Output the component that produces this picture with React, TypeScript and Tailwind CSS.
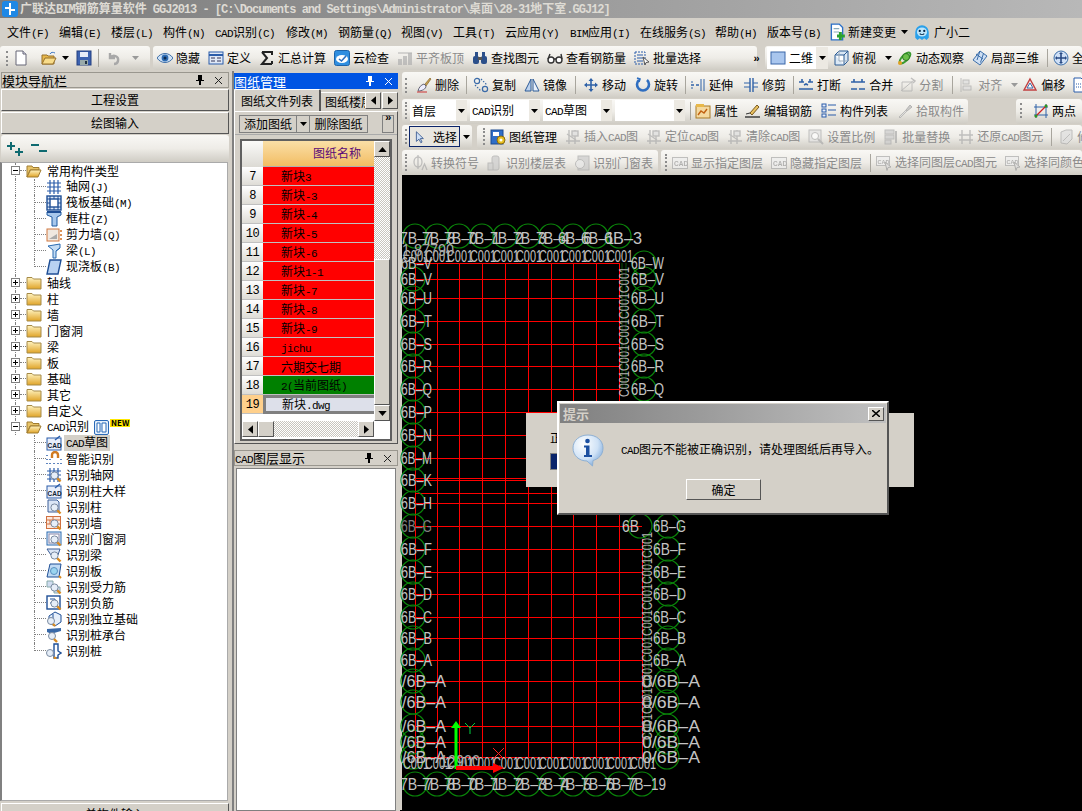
import React from "react";

const mono = "[font-family:'Liberation_Mono','Noto_Sans_CJK_SC',monospace] text-[11px] tracking-[-0.6px]";
const monoTitle = "[font-family:'Liberation_Mono','Noto_Sans_CJK_SC',monospace] text-[12px] tracking-[-1px]";
const raised = "border border-t-white border-l-white border-r-[#555] border-b-[#555] bg-[#d4d0c8]";
const bar = "bg-gradient-to-b from-[#f9f8f5] via-[#eeece7] to-[#cfccc4] rounded-[3px]";

function T({ s, className = "", latin = mono }: { s: string; className?: string; latin?: string }) {
  const parts = s.split(/([\x00-\x7f]+)/).filter(Boolean);
  return (
    <span className={"whitespace-pre leading-none " + className}>
      {parts.map((p, i) => (/^[\x00-\x7f]/.test(p) ? <span key={i} className={latin}>{p}</span> : <span key={i}>{p}</span>))}
    </span>
  );
}

const B = "#2a5caa";
const Mag = () => (
  <g>
    <path d="M11 11l3.500 3.500" stroke="#d98a1f" strokeWidth="2.400" />
    <circle cx="8.500" cy="8.500" r="3.600" fill="#e6eef8" stroke="#7a8aa0" />
  </g>
);
const Cad = () => (
  <g>
    <rect x="1" y="3" width="14" height="12" fill="#e8eefa" stroke={B} />
    <path d="M9 5l5-4" stroke={B} strokeWidth="1.500" />
    <text x="1.600" y="13" fontSize="6.500" fontWeight="700" fill="#123" fontFamily="Liberation Sans">CAD</text>
  </g>
);
const GridI = (
  <g stroke={B} strokeWidth="1.200" fill="none"><path d="M1 4h14M1 8h14M1 12h14M4 1v14M8 1v14M12 1v14" /></g>
);
const icons: Record<string, React.ReactNode> = {
  newf: <g><path d="M3 1h7l3 3v11H3z" fill="#fff" stroke="#667" /><path d="M10 1v3h3" fill="#dde" stroke="#667" /></g>,
  open: <g><path d="M1 5h5l1 1h6v8H1z" fill="#e8b84a" stroke="#96702a" /><path d="M1 14l3-6h11l-3 6z" fill="#f8dc8a" stroke="#96702a" /><path d="M9 4c1-2 3-2 5-1" stroke="#3a76c4" fill="none" /></g>,
  save: <g><rect x="1" y="1" width="14" height="14" fill="#3c62b0" stroke="#223f80" /><rect x="4" y="2" width="8" height="5" fill="#e6ecf8" /><rect x="4" y="10" width="8" height="5" fill="#9aa" /><rect x="9" y="11" width="2" height="3" fill="#234" /></g>,
  undo: <path d="M4 3v5h5M4 8c3-4 9-2 8 3-.4 2-2 3-4 3" stroke="#a8a8a8" strokeWidth="2.400" fill="none" />,
  eye: <g><path d="M0 8c4-6 12-6 16 0-4 6-12 6-16 0z" fill="#cfe2f6" stroke="#3f6fa8" /><circle cx="8" cy="8" r="3.400" fill="#2f6db4" /><circle cx="8" cy="8" r="1.500" fill="#0c2a50" /></g>,
  def: <g><rect x="1" y="2" width="14" height="12" fill="#dfe8f6" stroke={B} /><path d="M1 5h14" stroke={B} strokeWidth="2" /><path d="M3 8h4M3 11h4M9 8h4M9 11h4" stroke="#335" /></g>,
  sigma: <path d="M3 2h10v3M13 14H3l5-6-5-6M13 11v3" stroke="#222" strokeWidth="2" fill="none" />,
  cloud: <g><rect x="0.500" y="0.500" width="15" height="15" rx="2" fill="#2f8ee0" stroke="#1d63a8" /><ellipse cx="8" cy="9" rx="6" ry="4" fill="#fff" /><path d="M5 9l2.500 2L12 6" stroke="#2a6fc0" strokeWidth="1.600" fill="none" /></g>,
  gAlign: <g fill="#b0b0b0"><path d="M1 9h4v6H1zM6 6h4v9H6zM11 3h4v12h-4z" /><path d="M1 3h14" stroke="#999" /></g>,
  binoc: <g fill="#2b4f8a"><rect x="1" y="6" width="6" height="8" rx="2" /><rect x="9" y="6" width="6" height="8" rx="2" /><rect x="3" y="2" width="3" height="5" /><rect x="10" y="2" width="3" height="5" /><rect x="6" y="7" width="4" height="3" fill="#555" /></g>,
  glasses: <g stroke="#333" strokeWidth="1.400" fill="#fff"><circle cx="4" cy="10" r="3" /><circle cx="12" cy="10" r="3" /><path d="M7 9h2M1 9l2-5M15 9l-1-5" fill="none" /></g>,
  batch: <g fill="none" stroke={B}><rect x="1" y="2" width="10" height="12" strokeDasharray="2 1" /><path d="M3 5h6M3 8h6M3 11h6" /><path d="M9 7l6 5-3 .5-1 2.500z" fill="#fff" stroke="#555" /></g>,
  twoD: <rect x="1" y="2" width="14" height="12" fill="#a9c6ee" stroke="#3a66a8" />,
  cube: <g stroke="#2b5a92"><path d="M2 5l4-4h9v10l-4 4H2z" fill="#dbe8f5" /><path d="M2 5h9v10M11 5l4-4" fill="#fff" /><path d="M6 1v10h9" stroke="#9ab" fill="none" /></g>,
  orbit: <g><ellipse cx="8" cy="8" rx="7" ry="3" transform="rotate(-45 8 8)" fill="none" stroke="#3a9a30" strokeWidth="2" /><circle cx="9" cy="7" r="3.500" fill="#6cc04a" stroke="#2a7a20" /><circle cx="3" cy="13" r="2" fill="#e0a020" /></g>,
  local3: <g stroke="#3c6ea8" fill="#cfe0f4"><path d="M8 1l7 5-7 9-7-5z" /><path d="M4 4l7 5M8 1l-3 9M11.500 3.500l-3 9" fill="none" /></g>,
  full: <g><circle cx="8" cy="8" r="7" fill="#cfe0f6" stroke="#3c6ea8" /><path d="M8 3v10M3 8h10" stroke="#284a84" strokeWidth="1.600" /><path d="M8 2l-2 2h4zM8 14l-2-2h4zM2 8l2-2v4zM14 8l-2-2v4z" fill="#284a84" /></g>,
  del: <g><path d="M9 7l5-6 1 1-5 7z" fill="#c8a050" stroke="#785a20" strokeWidth=".6" /><path d="M2 14c1-4 3-6 6-7l2 2c0 3-4 5-8 5z" fill="#eef" stroke="#667" /><path d="M1 15h10" stroke="#c33" /></g>,
  copy: <g fill="none" stroke="#3a6aa8" strokeWidth="1.200"><circle cx="4" cy="4" r="2.600" /><circle cx="12" cy="12" r="2.600" /><path d="M8 2l6 6" strokeDasharray="1.500 1.500" /><path d="M2 8l6 6" strokeDasharray="1.500 1.500" /></g>,
  mirror: <g stroke="#2d5a96"><path d="M7 2L1 14h6z" fill="#bcd2ee" /><path d="M9 2l6 12H9z" fill="#eaf1fb" /></g>,
  move: <path d="M8 1l-2.500 3h1.700v3.200H4V5.500L1 8l3 2.500V8.800h3.200V12H5.500L8 15l2.500-3H8.800V8.800H12v1.700L15 8l-3-2.500v1.700H8.800V4h1.700z" fill="#2f62a8" />,
  rotate: <g fill="none" stroke="#2f6ec0" strokeWidth="2.600"><path d="M4 3a6 6 0 1 0 8 0" /><path d="M2 1l3 1-1 3" strokeWidth="1.600" /></g>,
  extend: <g stroke="#2f62a8" fill="none"><path d="M1 8h3M6 8h3" strokeWidth="1.600" /><path d="M11 2v12M14 2v12" /><path d="M1 5h2M1 11h2" /></g>,
  trim: <g stroke="#2f62a8" fill="none"><path d="M7 1v14M10 1v14" strokeWidth="1.400" /><path d="M1 6h6M1 10h6M10 6h5M10 10h5" /></g>,
  brk: <g stroke="#2f62a8" strokeWidth="1.600" fill="none"><path d="M1 5h5M10 5h5M1 12h14" /><path d="M4 2v3M12 2v3" /><path d="M6 8l2-1 2 1" /></g>,
  merge: <g stroke="#2f62a8" strokeWidth="1.600" fill="none"><path d="M1 5h14M1 12h6M9 12h6" /><path d="M4 2v3M12 2v3" /></g>,
  split: <g stroke="#aaa" fill="none"><path d="M1 14L14 3M2 5h10v9H2z" /><path d="M11 1l4 3-2 2" strokeWidth="1.500" /></g>,
  alignG: <g stroke="#aaa" fill="#ddd"><path d="M2 1v14" /><rect x="4" y="3" width="6" height="4" /><rect x="4" y="9" width="8" height="4" /></g>,
  offset: <g><path d="M8 2l6 11H2z" fill="#f4dfe0" stroke="#c04040" strokeWidth="1.400" /><path d="M8 6l3 5H5z" fill="#fff" stroke="#3a6aa8" /></g>,
  docu: <g><path d="M3 1h7l3 3v11H3z" fill="#fff" stroke={B} /><path d="M5 7h6M5 10h6" stroke={B} strokeDasharray="1 1" /></g>,
  attr: <g><rect x="1" y="3" width="14" height="12" fill="#f4d9a0" stroke="#a87824" /><rect x="1" y="1" width="8" height="3" fill="#e8b84a" /><path d="M3 12l3-4 3 2 3-4" stroke="#c06010" fill="none" strokeWidth="1.400" /></g>,
  edit: <g><path d="M5 10l7-8 2 2-7 8z" fill="#e8c060" stroke="#7a5a20" /><path d="M0 14h15" stroke="#333" strokeWidth="1.400" /><path d="M1 11l4-1" stroke="#333" /></g>,
  list: <g fill="#e8eefa" stroke={B}><rect x="1" y="1" width="4" height="3" /><rect x="1" y="6" width="4" height="3" /><rect x="1" y="11" width="4" height="3" /><path d="M7 2h8M7 7h8M7 12h8" /></g>,
  pick: <g><path d="M9 7l4-5 2 2-5 4z" fill="#bbb" stroke="#999" /><path d="M2 14l7-7 1 1-7 7z" fill="#ddd" stroke="#aaa" /></g>,
  twop: <g><path d="M3 1v14M13 1v14M1 4h14M1 12h14" stroke="#2f62a8" /><path d="M2 14L14 2" stroke="#d02020" strokeWidth="1.200" /><circle cx="3" cy="13" r="1.500" fill="#2a9a20" /><circle cx="13" cy="3" r="1.500" fill="#2a9a20" /></g>,
  pmgr: <g><rect x="1" y="1" width="12" height="14" fill="#2f6ec8" stroke="#1c4a90" /><rect x="3" y="3" width="6" height="4" fill="#fff" /><circle cx="11" cy="11" r="4" fill="#e8c020" stroke="#8a6a10" /><circle cx="11" cy="11" r="1.500" fill="#fff" /></g>,
  gCad: <g stroke="#aaa" fill="none" strokeWidth="1.400"><path d="M4 1v14M10 1v14M1 12h14" /><path d="M2 5l9 6" /><rect x="7" y="2" width="6" height="5" fill="#ddd" /></g>,
  gMag: <g><rect x="1" y="1" width="12" height="12" fill="#e4e4e4" stroke="#aaa" /><circle cx="7" cy="7" r="3.500" fill="#fff" stroke="#aaa" /><path d="M10 10l5 5" stroke="#aaa" strokeWidth="2" /></g>,
  gStack: <g fill="#ccc" stroke="#aaa"><rect x="2" y="1" width="9" height="4" /><rect x="2" y="6" width="9" height="4" /><rect x="2" y="11" width="6" height="4" /><path d="M13 2v12" strokeWidth="2" /></g>,
  gGrid: <g stroke="#aaa" fill="none" strokeWidth="1.400"><path d="M4 1v14M12 1v14M1 6h14M1 11h14" /></g>,
  gPhi: <g fill="none" stroke="#aaa" strokeWidth="1.300"><ellipse cx="6" cy="7" rx="4" ry="5" /><path d="M6 0v14" /><path d="M10 15l2.500-6 2.500 6" /></g>,
  gFloor: <g fill="#ccc" stroke="#aaa"><rect x="5" y="1" width="7" height="14" rx="2" /><rect x="1" y="8" width="5" height="7" /></g>,
  gDoor: <g fill="#ccc" stroke="#aaa"><rect x="4" y="1" width="11" height="14" /><circle cx="6" cy="9" r="4.500" fill="#e6e6e6" /></g>,
  gBox: <g><rect x="0.500" y="2.500" width="15" height="11" fill="#eee" stroke="#aaa" /><text x="2" y="11" fontSize="6.500" fill="#999" fontFamily="Liberation Sans" fontWeight="700">CAD</text></g>,
  gSel: <g><rect x="0.500" y="1.500" width="13" height="9" fill="#eee" stroke="#aaa" /><text x="1.500" y="8.500" fontSize="5.500" fill="#999" fontFamily="Liberation Sans" fontWeight="700">CAD</text><path d="M9 7l6 5-3 .5-1 3z" fill="#ddd" stroke="#999" /></g>,
  gTool: <g stroke="#aaa" fill="#ddd"><path d="M3 14V3l5-2h6v9l-5 5z" /><path d="M5 12l7-7" /></g>,
  selArrow: <path d="M5 2v11l3-2.500 2 4 1.500-.7-2-4H13z" fill="#cfe0f6" stroke="#3a5a90" />,
  newDoc: <g><path d="M3 1h7l3 3v11H3z" fill="#fff" stroke="#2a70c8" strokeWidth="1.200" /><path d="M5 5h5M5 8h5" stroke="#8ab" /><path d="M11 8v7M8 11.500h7" stroke="#2aa030" strokeWidth="2.600" /></g>,
  bot: <g><path d="M2 8a6 6 0 0 1 12 0v5l-2 2-2-1.500L8 15l-2-1.500L4 15l-2-2z" fill="#2aa0ea" /><ellipse cx="8" cy="8" rx="4.500" ry="4" fill="#bfe6fb" /><circle cx="6" cy="7" r="1" fill="#024" /><circle cx="10" cy="7" r="1" fill="#024" /><path d="M6 9.500c1 1 3 1 4 0" stroke="#024" fill="none" /></g>,
  tGrid: GridI,
  tRaft: <g><rect x="1" y="1" width="14" height="14" fill="#dbe6f6" stroke="#1f4f96" strokeWidth="1.400" /><rect x="4" y="4" width="8" height="8" fill="#fff" stroke="#1f4f96" strokeWidth="1.400" /><path d="M1 4h3M1 8h3M1 12h3M12 4h3M12 8h3M12 12h3M4 1v3M8 1v3M12 1v3M4 12v3M8 12v3M12 12v3" stroke="#1f4f96" /></g>,
  tCol: <g><path d="M1 1h14v3l-4 2v9H6V6L1 4z" fill="#a8c8ec" stroke="#1f5aa0" /><path d="M1 1h14" stroke="#1f4f96" strokeWidth="2" /></g>,
  tWall: <g><rect x="1" y="2" width="12" height="12" fill="#f0e8e0" stroke="#d07840" /><path d="M3 12l8-5v5z" fill="#aaa" /><path d="M15 3v2M15 7v2M15 11v2" stroke="#d07020" strokeWidth="1.500" /></g>,
  tBeam: <g><path d="M2 3l12-2v4l-4 3v7H7V7z" fill="#c4dcf4" stroke="#2a6ab0" /><path d="M10 8l4-3" stroke="#2a6ab0" /></g>,
  tSlab: <path d="M4 1h11l-3 14H1z" fill="#b8d2f2" stroke="#1f4f96" strokeWidth="1.400" />,
  tCad: <Cad />,
  tMagnet: <g><path d="M6 7V4a3 3 0 0 1 6 0v3" fill="none" stroke="#d07a20" strokeWidth="2.400" /><path d="M1 4v1M1 8v1M1 12v1M4 8v1M4 12v1M8 12v1M12 12v1M15 8v1M15 12v1" stroke={B} strokeWidth="1.500" /></g>,
  rAxis: <g>{GridI}<Mag /></g>,
  rCad: <g><Cad /></g>,
  rCol: <g><path d="M2 1h9l2 2v10H2z" fill="#dbe6f6" stroke="#3c5f98" /><Mag /></g>,
  rWall: <g><rect x="0.500" y="1.500" width="14" height="12" fill="#fbe8dc" stroke="#d07040" /><path d="M1 5h14M1 9h14M7 1v4M4 5v4M10 5v4" stroke="#d07040" /><Mag /></g>,
  rDoor: <g><rect x="1" y="1" width="14" height="13" fill="#e6effa" stroke="#2a6ab0" /><rect x="3" y="3" width="10" height="9" fill="#fff" stroke="#88a" /><Mag /></g>,
  rBeam: <g><path d="M1 2h13l-2 6H5z" fill="#dbe6f6" stroke="#3c5f98" /><Mag /></g>,
  rSlab: <g><path d="M4 1h11l-2 13H1z" fill="#c0daf4" stroke="#1f4f96" /><circle cx="8" cy="8" r="3.500" fill="#9ad4f0" stroke="#5a90c0" /><path d="M13 13l2 2" stroke="#d98a1f" strokeWidth="2" /></g>,
  rRebar: <g><path d="M1 2h6v6H1zM8 8h6v6H8z" fill="#cfdcf0" stroke="#8aa" /><Mag /></g>,
  rNeg: <g><rect x="1" y="1" width="13" height="13" fill="#fff" stroke="#1f4f96" strokeWidth="1.400" /><path d="M4 4h5v4H4" fill="none" stroke="#1f4f96" /><Mag /></g>,
  rFound: <g><path d="M3 5l6-4 6 3v7l-6 4-6-3z" fill="#e6effa" stroke="#1f4f96" /><path d="M7 3v9" stroke="#1f4f96" /><circle cx="5" cy="10" r="3.500" fill="#e6eef8" stroke="#7a8aa0" /><path d="M7 13l2 2" stroke="#d98a1f" strokeWidth="2.400" /></g>,
  rCap: <g><path d="M1 2l14-1v3L8 6v2l-7-3z" fill="#3868a8" /><circle cx="6" cy="9" r="3.500" fill="#e6eef8" stroke="#7a8aa0" /><path d="M8 12l3 3" stroke="#d98a1f" strokeWidth="2.400" /></g>,
  rPile: <g><path d="M8 1h4v7l3 2-3 2v3H8v-4z" fill="#fff" stroke="#1f4f96" strokeWidth="1.400" /><circle cx="4" cy="10" r="3.500" fill="#e6eef8" stroke="#7a8aa0" /><path d="M8 14l2 2" stroke="#d98a1f" strokeWidth="2.400" /></g>,
};

const Ic = ({ k, size = 16, grey = false }: { k: string; size?: number; grey?: boolean }) => (
  <svg viewBox="0 0 16 16" width={size} height={size} className={"shrink-0" + (grey ? " grayscale opacity-70" : "")}>{icons[k]}</svg>
);

const Caret = ({ color = "#000" }: { color?: string }) => (
  <svg width="7" height="4" viewBox="0 0 7 4" className="shrink-0"><path d="M0 0h7L3.500 4z" fill={color} /></svg>
);
const Chev = () => <span className={mono + " font-bold text-[10px] -mt-1.5"}>»</span>;

const Grip = () => <span className="w-0 h-[15px] ml-[3px] mr-[5px] border-l-2 border-dotted border-[#8c8c8c] shrink-0" />;
const Sep = () => <span className="block w-0 h-[18px] border-l border-[#a8a59d] shrink-0" />;

function Tool({ k, s, grey, caret }: { k: string; s: string; grey?: boolean; caret?: boolean }) {
  return (
    <span className="flex items-center shrink-0 gap-[3px]">
      <Ic k={k} grey={grey} />
      <T s={s} className={grey ? "text-[#8a8a8a]" : "text-black"} />
      {caret && <span className="ml-1.5"><Caret color={grey ? "#999" : "#000"} /></span>}
    </span>
  );
}

function Sel({ s, w }: { s: string; w: string }) {
  return (
    <span className={"h-[21px] bg-white flex items-center justify-between shrink-0 " + w}>
      <T s={s} className="pl-[2px]" />
      <span className="h-full w-[11px] bg-[#ece9e2] flex items-center justify-center"><Caret /></span>
    </span>
  );
}

const cols = [415, 437, 459, 482, 505, 528, 551, 573, 596, 619];
const hLines = [264, 280, 299, 322, 345, 367, 390, 413, 436, 459, 479, 481, 494, 504, 527, 550, 573, 595, 618, 639, 661, 682, 703, 727, 743, 758];
const leftL: [number, string][] = [[280, "V"], [299, "U"], [322, "T"], [345, "S"], [367, "R"], [390, "Q"], [413, "P"], [436, "N"], [459, "M"], [481, "K"], [504, "H"], [527, "G"], [550, "F"], [573, "E"], [595, "D"], [618, "C"], [639, "B"], [661, "A"]];
const rightTop: [number, string][] = [[264, "W"], [280, "V"], [299, "U"], [322, "T"], [345, "S"], [367, "R"], [390, "Q"]];
const rightBot: [number, string][] = [[527, "G"], [550, "F"], [573, "E"], [595, "D"], [618, "C"], [639, "B"], [661, "A"]];
const slashY = [682, 703, 727, 743, 758];
const sans = "Liberation Sans";
const grayText = "#c4c4c4";

function Lbl({ x, y, s, w, fill = grayText }: { x: number; y: number; s: string; w: number; fill?: string }) {
  return <text x={x} y={y + 6} fontSize="16" fontFamily={sans} fill={fill} textLength={w} lengthAdjust="spacingAndGlyphs">{s}</text>;
}

function Canvas() {
  const top = ["7B–7", "7B–8", "7B–0", "7B–1", "7B–2", "7B–3", "7B–4", "6B–6", "6B–1", "6B–3"];
  const bot = ["7B–7", "7B–8", "7B–0", "7B–1", "7B–2", "7B–3", "7B–4", "7B–5", "7B–6", "7B–7", "7B–19"];
  const botCols = [...cols, 642];
  return (
    <svg viewBox="400 176 682 635" width="682" height="635" className="block">
      <rect x="400" y="176" width="2" height="635" fill="#d4d0c8" />
      <g stroke="#ff0000" strokeWidth="1" shapeRendering="crispEdges">
        {hLines.map((y) => <line key={y} x1={415} x2={y >= 527 ? 642 : 619} y1={y + 0.5} y2={y + 0.5} />)}
        {cols.map((x) => <line key={x} x1={x + 0.5} x2={x + 0.5} y1={264} y2={759} />)}
        <line x1={642.5} x2={642.5} y1={540} y2={759} />
      </g>
      <g stroke="#0a860a" strokeWidth="1.200" fill="none">
        {top.map((_, i) => <circle key={i} cx={cols[i]} cy={237} r={12} />)}
        {botCols.map((x) => <circle key={x} cx={x} cy={785} r={12} />)}
        {leftL.map(([y]) => <circle key={y} cx={413} cy={y} r={12} />)}
        {slashY.map((y) => <circle key={y} cx={413} cy={y} r={12} />)}
        {rightTop.map(([y]) => <circle key={y} cx={644} cy={y} r={12} />)}
        {rightBot.map(([y]) => <circle key={y} cx={668} cy={y} r={12} />)}
        {slashY.map((y) => <circle key={y} cx={667} cy={y} r={12} />)}
        <circle cx={640} cy={527} r={12} />
        <path d="M622 264v126M626 264v126M645 535v225M649 535v225" strokeWidth=".6" />
      </g>
      <g>
        {top.map((s, i) => <Lbl key={i} x={cols[i] - 15} y={239} s={s} w={i === 9 ? 38 : 33} />)}
        {bot.map((s, i) => <Lbl key={i} x={botCols[i] - 15} y={785} s={s} w={i === 10 ? 39 : 33} />)}
        {cols.map((x) => <Lbl key={x} x={x - 12} y={257} s="C001" w={26} />)}
        {botCols.map((x) => <Lbl key={x} x={x - 12} y={764} s="C001" w={26} />)}
        <Lbl x={402} y={251} s="1.87790" w={52} fill="#a8a8a8" />
        {leftL.map(([y, l]) => <Lbl key={y} x={401} y={y} s={"6B–" + l} w={31} fill={l === "G" ? "#808080" : grayText} />)}
        {slashY.map((y) => <Lbl key={y} x={402} y={y} s="/6B–A" w={44} />)}
        <Lbl x={401} y={264} s="6B–V" w={31} />
        {rightTop.map(([y, l]) => <Lbl key={y} x={631} y={y} s={"6B–" + l} w={33} />)}
        {rightBot.map(([y, l]) => <Lbl key={y} x={653} y={y} s={"6B–" + l} w={33} />)}
        <Lbl x={622} y={527} s="6B" w={17} />
        {slashY.map((y) => <Lbl key={y} x={642} y={y} s="0/6B–A" w={58} />)}
        {[270, 296, 322, 348, 374].map((y) => <text key={y} transform={`translate(629 ${y + 24}) rotate(-90)`} fontSize="14" fill="#b4b4b4" fontFamily={sans} textLength={26} lengthAdjust="spacingAndGlyphs">C001</text>)}
        {[535, 561, 587, 613, 639, 665, 691, 717].map((y) => <text key={y} transform={`translate(652 ${y + 24}) rotate(-90)`} fontSize="14" fill="#b4b4b4" fontFamily={sans} textLength={26} lengthAdjust="spacingAndGlyphs">C001</text>)}
        <Lbl x={440} y={762} s="12900" w={40} fill="#a8a8a8" />
      </g>
      <path d="M454.500 770v-41h-3.500l5-7 5 7h-3.500v41z" fill="#00ff00" />
      <path d="M456 767h37v-3l11 5-11 5v-3h-37z" fill="#ff0000" />
      <path d="M465 724l5 5 5-5M470 729v6" stroke="#00d040" fill="none" />
      <path d="M493 749l11 11M504 749l-11 11" stroke="#ff2020" fill="none" />
    </svg>
  );
}

type Node = { k?: string; s: string; folder?: "open" | "closed"; sel?: boolean; extra?: boolean; last?: boolean };
const tree: Node[] = [
  { s: "常用构件类型", folder: "open" },
  { s: "轴网(J)", k: "tGrid" }, { s: "筏板基础(M)", k: "tRaft" }, { s: "框柱(Z)", k: "tCol" }, { s: "剪力墙(Q)", k: "tWall" }, { s: "梁(L)", k: "tBeam" }, { s: "现浇板(B)", k: "tSlab", last: true },
  { s: "轴线", folder: "closed" }, { s: "柱", folder: "closed" }, { s: "墙", folder: "closed" }, { s: "门窗洞", folder: "closed" }, { s: "梁", folder: "closed" }, { s: "板", folder: "closed" }, { s: "基础", folder: "closed" }, { s: "其它", folder: "closed" }, { s: "自定义", folder: "closed" },
  { s: "CAD识别", folder: "open", extra: true },
  { s: "CAD草图", k: "tCad", sel: true }, { s: "智能识别", k: "tMagnet" }, { s: "识别轴网", k: "rAxis" }, { s: "识别柱大样", k: "rCad" }, { s: "识别柱", k: "rCol" }, { s: "识别墙", k: "rWall" }, { s: "识别门窗洞", k: "rDoor" }, { s: "识别梁", k: "rBeam" }, { s: "识别板", k: "rSlab" }, { s: "识别受力筋", k: "rRebar" }, { s: "识别负筋", k: "rNeg" }, { s: "识别独立基础", k: "rFound" }, { s: "识别桩承台", k: "rCap" }, { s: "识别桩", k: "rPile", last: true },
];

const Folder = ({ open }: { open: boolean }) => (
  <svg width="16" height="14" viewBox="0 0 16 14" className="shrink-0">
    <defs><linearGradient id="fg" x1="0" y1="0" x2="0" y2="1"><stop offset="0" stopColor="#fff3c0" /><stop offset="1" stopColor="#e0a428" /></linearGradient></defs>
    {open ? (
      <g><path d="M1 2h5l1 1.500h6V6H4L1 13z" fill="#e8c468" stroke="#a07c30" /><path d="M1 13l3.500-7H15l-3 7z" fill="url(#fg)" stroke="#a07c30" /></g>
    ) : (
      <g><path d="M1 3V1.500h5L7.500 3H15v10H1z" fill="url(#fg)" stroke="#a58a48" /></g>
    )}
  </svg>
);

function Box({ plus }: { plus: boolean }) {
  return (
    <span className="absolute left-[8px] top-[3px] w-[9px] h-[9px] border border-[#808080] bg-white flex items-center justify-center">
      <span className="relative w-[5px] h-px bg-black">
        {plus && <span className="absolute left-[2px] -top-[2px] w-px h-[5px] bg-black" />}
      </span>
    </span>
  );
}

function TreeRow({ n, inFolder }: { n: Node; inFolder: boolean }) {
  return (
    <div className="relative h-4 flex items-center">
      {n.folder ? (
        <>
          <span className="absolute left-[12px] top-0 h-4 border-l border-dotted border-[#808080]" />
          <span className="absolute left-[17px] top-[7px] w-[6px] border-t border-dotted border-[#808080]" />
          <Box plus={n.folder === "closed"} />
          <span className="ml-[23px]"><Folder open={n.folder === "open"} /></span>
          <T s={n.s} className="ml-[5px] text-black" />
          {n.extra && (
            <span className="relative ml-[5px] flex items-center">
              <svg width="15" height="15" viewBox="0 0 15 15"><rect x=".5" y=".5" width="14" height="14" rx="1.500" fill="#e4effb" stroke="#2a6ab8" /><path d="M3 3h3v9H3zM8 3h4v9H8z" fill="#fff" stroke="#2a6ab8" /></svg>
              <span className="absolute left-[16px] -top-[1px] bg-[#ffe800] text-[8px] leading-[8px] font-bold text-black px-px">NEW</span>
            </span>
          )}
        </>
      ) : (
        <>
          {inFolder && <span className="absolute left-[12px] top-0 h-4 border-l border-dotted border-[#808080]" />}
          <span className={"absolute left-[31px] top-0 border-l border-dotted border-[#808080] " + (n.last ? "h-2" : "h-4")} />
          <span className="absolute left-[32px] top-[7px] w-[11px] border-t border-dotted border-[#808080]" />
          <span className="ml-[43px]"><Ic k={n.k as string} /></span>
          <span className={"ml-[2px] h-4 px-[2px] flex items-center " + (n.sel ? "bg-[#d4d0c8]" : "")}><T s={n.s} /></span>
        </>
      )}
    </div>
  );
}

const PanelTitle = ({ s, active }: { s: string; active?: boolean }) => (
  <div className={"h-4 flex items-center justify-between text-[13px] " + (active ? "bg-[#0054e3] text-white" : "border border-[#9a978f] text-black")}>
    <T s={s} />
    <span className="flex items-center gap-[10px] pr-[5px]">
      <svg width="8" height="10" viewBox="0 0 8 10"><path d="M2 0h4v5h2v1H5v4H3V6H0V5h2z" fill={active ? "#fff" : "#000"} /></svg>
      <svg width="9" height="9" viewBox="0 0 9 9"><path d="M1 1l7 7M8 1L1 8" stroke={active ? "#fff" : "#222"} /></svg>
    </span>
  </div>
);

const Arrow = ({ d }: { d: "u" | "d" | "l" | "r" }) => {
  const p = { u: "M0 6L5 0l5 6z", d: "M0 0h10L5 6z", l: "M6 0v10L0 5z", r: "M0 0v10l6-5z" }[d];
  const wh = d === "u" || d === "d" ? [9, 5] : [5, 9];
  return <svg width={wh[0]} height={wh[1]} viewBox={d === "u" || d === "d" ? "0 0 10 6" : "0 0 6 10"}><path d={p} fill="#000" /></svg>;
};

const checker = "bg-[repeating-conic-gradient(#ffffff_0_25%,#c8c5bd_0_50%)] bg-[length:2px_2px]";

const rows: [number, string, string][] = [
  [7, "新块3", "r"], [8, "新块-3", "r"], [9, "新块-4", "r"], [10, "新块-5", "r"], [11, "新块-6", "r"], [12, "新块1-1", "r"], [13, "新块-7", "r"], [14, "新块-8", "r"], [15, "新块-9", "r"], [16, "jichu", "r"], [17, "六期交七期", "r"], [18, "2(当前图纸)", "g"], [19, "新块.dwg", "s"],
];

function Grid() {
  return (
    <div className="mx-[5px] mt-[4px] h-[302px] border-2 border-[#606060] flex bg-white relative">
      <div className="w-[134px] flex flex-col">
        <div className="flex h-[26px] shrink-0">
          <div className="w-[21px] bg-gradient-to-b from-[#fbfbf9] to-[#dcdad4]" />
          <div className="flex-1 bg-gradient-to-b from-[#fadfa6] to-[#f2bd62] flex items-center pl-[50px] pb-[1px] text-[#5a0a78] border-b border-[#b0b0b0]"><T s="图纸名称" /></div>
        </div>
        {rows.map(([n, s, c]) => (
          <div key={n} className="flex h-[19px] shrink-0">
            <div className={"w-[21px] pt-[1px] flex items-center justify-center border-b border-[#c0c0c0] " + (c === "s" ? "bg-[#ffd08c]" : "bg-gradient-to-b from-white to-[#dedcd6]")}>
              <span className="[font-family:'Liberation_Mono',monospace] text-[12px] tracking-[-0.5px]">{n}</span>
            </div>
            <div className={"flex-1 flex items-center " + (c === "r" ? "pl-[18px] pt-[1px] bg-[#ff0000] border-b border-[#c0c0c0]" : c === "g" ? "pl-[18px] pt-[1px] bg-[#008000] border-b border-[#c0c0c0]" : "bg-[#dde0ea] border-[3px] border-[#808080] border-r-0 pl-[16px]")}>
              <T s={s} className="text-black" />
            </div>
          </div>
        ))}
        <div className="h-[7px] shrink-0" />
        <div className={"h-4 shrink-0 flex " + checker}>
          <span className={raised + " w-4 flex items-center justify-center"}><Arrow d="l" /></span>
          <span className={raised + " w-4"} />
          <span className="flex-1" />
          <span className={raised + " w-4 flex items-center justify-center"}><Arrow d="r" /></span>
        </div>
      </div>
      <div className="w-4 flex flex-col h-[280px]">
        <span className={raised + " h-4 shrink-0 flex items-center justify-center"}><Arrow d="u" /></span>
        <span className={"h-[102px] shrink-0 " + checker} />
        <span className={raised + " flex-1"} />
        <span className={raised + " h-4 shrink-0 flex items-center justify-center"}><Arrow d="d" /></span>
      </div>
    </div>
  );
}

function Dialogs() {
  return (
    <>
      <div className="absolute left-[526px] top-[413px] w-[388px] h-[74px] bg-[#d4d0c8]">
        <span className="absolute left-[24px] top-[16px]"><T s="正" /></span>
        <span className="absolute left-[24px] top-[40px] w-[10px] h-[17px] bg-[#0a246a] border border-[#808080]" />
      </div>
      <div className="absolute left-[557px] top-[401px] w-[332px] h-[114px] bg-[#d4d0c8] border-2 border-t-white border-l-white border-r-[#555] border-b-[#555] p-[1px] flex flex-col">
        <div className="h-[19px] bg-gradient-to-r from-[#808080] to-[#c0c0c0] flex items-center justify-between pl-[3px] pr-[2px]">
          <span className="text-[13px] font-bold text-[#d4d0c8] leading-none">提示</span>
          <span className={raised + " w-[16px] h-[14px] flex items-center justify-center"}>
            <svg width="8" height="7" viewBox="0 0 8 7"><path d="M0 0l8 7M8 0L0 7" stroke="#000" strokeWidth="1.500" /></svg>
          </span>
        </div>
        <div className="flex items-start pl-[12px] pt-[11px]">
          <svg width="32" height="33" viewBox="0 0 32 33" className="shrink-0">
            <defs><radialGradient id="bub" cx=".35" cy=".3" r=".8"><stop offset="0" stopColor="#ffffff" /><stop offset=".6" stopColor="#cfe2f6" /><stop offset="1" stopColor="#7aa6d8" /></radialGradient></defs>
            <path d="M16 1c8.500 0 15 5.500 15 13s-5 11-10 12.500L20.500 32 15 27C7 27 1 21.500 1 14S7.500 1 16 1z" fill="url(#bub)" stroke="#8eb0d4" />
            <circle cx="15.500" cy="7" r="2.300" fill="#1b4fa0" />
            <path d="M12 11.500h5.500V21H20v2h-8v-2h2v-7.500h-2z" fill="#1b4fa0" />
          </svg>
          <T s="CAD图元不能被正确识别，请处理图纸后再导入。" className="ml-[17px] mt-[9px] text-black" />
        </div>
        <div className="flex justify-center mt-[12px] pl-[1px]">
          <span className={raised + " w-[75px] h-[21px] flex items-center justify-center"}><T s="确定" /></span>
        </div>
      </div>
    </>
  );
}

export default function App() {
  const menu = [["文件(F)", 42], ["编辑(E)", 42], ["楼层(L)", 42], ["构件(N)", 42], ["CAD识别(C)", 61], ["修改(M)", 42], ["钢筋量(Q)", 53], ["视图(V)", 42], ["工具(T)", 42], ["云应用(Y)", 55], ["BIM应用(I)", 60], ["在线服务(S)", 65], ["帮助(H)", 42], ["版本号(B)", 52]] as [string, number][];
  return (
    <div className="relative w-[1082px] h-[811px] overflow-hidden bg-[#d4d0c8] flex flex-col text-[12px] text-black [font-family:'Noto_Sans_CJK_SC','Liberation_Sans',sans-serif]">
      <div className="h-[18px] bg-gradient-to-r from-[#7c7c7c] to-[#b8b8b8] flex items-center shrink-0 text-[#dedbd4] font-bold">
        <svg width="16" height="16" viewBox="0 0 16 16" className="ml-[2px] mr-[2px] shrink-0"><rect width="16" height="16" rx="3" fill="#1e88e5" /><path d="M8 2v5H3M8 14V9h5" stroke="#fff" strokeWidth="2" fill="none" /></svg>
        <T s="广联达BIM钢筋算量软件 GGJ2013 - [C:\Documents and Settings\Administrator\桌面\28-31地下室.GGJ12]" latin={monoTitle} />
      </div>

      <div className="h-[27px] flex items-center pl-[7px] gap-[10px] shrink-0">
        {menu.map(([s, w]) => (
          <span key={s} style={{ width: w }} className="shrink-0"><T s={s} /></span>
        ))}
        <span className="flex items-center -ml-[1px] shrink-0"><Ic k="newDoc" size={18} /><T s="新建变更" className="ml-[2px]" /><span className="ml-[5px]"><Caret /></span></span>
        <span className="flex items-center shrink-0 -ml-[5px]"><Ic k="bot" size={18} /><T s="广小二" className="ml-[3px]" /></span>
      </div>

      <div className="h-[26px] flex items-center gap-[3px] shrink-0">
        <div className={"w-[150px] h-[24px] flex items-center shrink-0 pl-[3px] " + bar}>
          <Grip />
          <Ic k="newf" />
          <span className="ml-[12px]"><Ic k="open" /></span>
          <span className="ml-[5px]"><Caret /></span>
          <span className="ml-[7px]"><Ic k="save" /></span>
          <span className="ml-[6px]"><Sep /></span>
          <span className="ml-[7px]"><Ic k="undo" /></span>
          <span className="ml-[10px]"><Caret color="#999" /></span>
          <span className="ml-[16px]"><Chev /></span>
        </div>
        <div className={"w-[604px] h-[24px] flex items-center gap-2 pl-[4px] shrink-0 " + bar}>
          <Tool k="eye" s="隐藏" />
          <Tool k="def" s="定义" />
          <Tool k="sigma" s="汇总计算" />
          <Tool k="cloud" s="云检查" />
          <Tool k="gAlign" s="平齐板顶" grey />
          <Tool k="binoc" s="查找图元" />
          <Tool k="glasses" s="查看钢筋量" />
          <Tool k="batch" s="批量选择" />
          <span className="ml-[44px]"><Chev /></span>
        </div>
        <div className={"ml-[5px] flex-1 h-[24px] flex items-center gap-[5px] pl-[2px] overflow-hidden " + bar}>
          <span className="w-[61px] h-[22px] bg-white flex items-center shrink-0">
            <span className="ml-[3px]"><Ic k="twoD" /></span>
            <T s="二维" className="ml-[3px] flex-1" />
            <span className="w-[12px] h-full bg-[#ece9e2] flex items-center justify-center"><Caret /></span>
          </span>
          <Tool k="cube" s="俯视" caret />
          <Tool k="orbit" s="动态观察" />
          <span className="ml-[3px]"><Tool k="local3" s="局部三维" /></span>
          <span className="ml-[3px]"><Sep /></span>
          <Tool k="full" s="全屏" />
        </div>
      </div>

      <div className="flex-1 flex min-h-0">
        <div className="w-[232px] shrink-0 pl-[1px] pr-[3px] flex flex-col pt-[1px]">
          <PanelTitle s="模块导航栏" />
          <div className={raised + " h-[22px] mt-[1px] flex items-center justify-center"}><T s="工程设置" /></div>
          <div className={raised + " h-[22px] mt-[1px] flex items-center justify-center"}><T s="绘图输入" /></div>
          <div className={"h-[27px] mt-[1px] flex items-center pl-[6px] gap-[5px] " + bar}>
            <svg width="18" height="16" viewBox="0 0 18 16"><path d="M4 1v8M0 5h8M12 7v8M8 11h8" stroke="#0f6a70" strokeWidth="2" /></svg>
            <svg width="18" height="16" viewBox="0 0 18 16"><path d="M1 4h8M9 10h8" stroke="#0f6a70" strokeWidth="2" /></svg>
          </div>
          <div className="flex-1 bg-white border border-[#aaa] border-l-2 border-l-[#808080] -ml-[1px] mr-[1px] overflow-hidden pl-[1px]">
            {tree.map((n, i) => <TreeRow key={i} n={n} inFolder={i > 0 && i < 16} />)}
          </div>
          <div className={raised + " h-[22px] mt-[2px] shrink-0 flex items-center justify-center -mb-[14px]"}><T s="单构件输入" /></div>
        </div>

        <div className="w-[168px] shrink-0 flex flex-col pt-[2px] border-l-2 border-[#808080] pr-[2px]">
          <PanelTitle s="图纸管理" active />
          <div className="h-[22px] flex items-end relative">
            <span className="w-[87px] h-[22px] bg-[#d4d0c8] border-t border-l border-white border-r-2 border-r-[#555] rounded-t-[2px] flex items-center justify-center z-10 shrink-0"><T s="图纸文件列表" /></span>
            <span className="w-[44px] h-[19px] overflow-hidden flex items-center pl-[4px] border-t border-white shrink-0"><T s="图纸楼层" /></span>
            <span className={raised + " absolute left-[131px] top-[3px] w-[16px] h-[17px] flex items-center justify-center"}><Arrow d="l" /></span>
            <span className={raised + " absolute left-[148px] top-[3px] w-[16px] h-[17px] flex items-center justify-center"}><Arrow d="r" /></span>
          </div>
          <div className="flex-none h-[333px] border border-t-white border-l-white border-r-[#555] border-b-[#555] flex flex-col">
            <div className="h-[23px] flex items-center pl-[4px] pt-[2px] border-b border-[#aaa]">
              <span className="h-[18px] w-[58px] border border-[#808080] flex items-center justify-center"><T s="添加图纸" /></span>
              <span className="h-[18px] w-[13px] border border-l-0 border-[#808080] flex items-center justify-center"><Caret /></span>
              <span className="h-[18px] w-[58px] border border-l-0 border-[#808080] flex items-center justify-center"><T s="删除图纸" /></span>
              <span className="h-[18px] w-[12px] border border-[#808080] flex items-start justify-center ml-[14px]"><Chev /></span>
            </div>
            <Grid />
          </div>
          <div className="mt-[6px]"><PanelTitle s="CAD图层显示" /></div>
          <div className="flex-1 mt-[2px] mx-[2px] bg-white border border-[#808080]" />
        </div>

        <div className="flex-1 min-w-0 flex flex-col pt-[1px]">
          <div className="pl-[2px] shrink-0">
            <div className={"h-[26px] flex items-center gap-[4px] whitespace-nowrap overflow-hidden " + bar}>
              <Grip />
              <Tool k="del" s="删除" />
              <span className="ml-[3px]"><Sep /></span>
              <span className="ml-[2px]"><Tool k="copy" s="复制" /></span>
              <span className="ml-[4px]"><Tool k="mirror" s="镜像" /></span>
              <span className="ml-[4px]"><Sep /></span>
              <span className="ml-[3px]"><Tool k="move" s="移动" /></span>
              <span className="ml-[5px]"><Tool k="rotate" s="旋转" /></span>
              <span className="ml-[3px]"><Sep /></span>
              <Tool k="extend" s="延伸" />
              <span className="ml-[6px]"><Tool k="trim" s="修剪" /></span>
              <span className="ml-[3px]"><Sep /></span>
              <Tool k="brk" s="打断" />
              <span className="ml-[5px]"><Tool k="merge" s="合并" /></span>
              <span className="ml-[3px]"><Tool k="split" s="分割" grey /></span>
              <span className="ml-[5px]"><Sep /></span>
              <span className="ml-[2px]"><Tool k="alignG" s="对齐" grey caret /></span>
              <Tool k="offset" s="偏移" />
              <span className="ml-[2px]"><Ic k="docu" /></span>
            </div>
          </div>
          <div className="h-[25px] mt-px flex items-center shrink-0 pl-[2px] gap-[48px]">
            <div className={"w-[566px] h-[25px] pb-[2px] flex items-center gap-[3px] shrink-0 " + bar}>
              <span className="-mr-[5px]"><Grip /></span>
              <Sel s="首层" w="w-[57px]" />
              <Sel s="CAD识别" w="w-[70px]" />
              <Sel s="CAD草图" w="w-[69px]" />
              <Sel s="" w="w-[70px]" />
              <span className="ml-[2px]"><Sep /></span>
              <span className="ml-[1px]"><Tool k="attr" s="属性" /></span>
              <span className="ml-[4px]"><Tool k="edit" s="编辑钢筋" /></span>
              <span className="ml-[6px]"><Tool k="list" s="构件列表" /></span>
              <span className="ml-[6px]"><Tool k="pick" s="拾取构件" grey /></span>
            </div>
            <div className={"flex-1 h-[25px] pb-[2px] flex items-center pl-[1px] gap-[6px] overflow-hidden " + bar}>
              <Grip />
              <Tool k="twop" s="两点" />
              <Ic k="twop" />
            </div>
          </div>
          <div className="h-[25px] flex items-center shrink-0 pl-[2px] gap-[5px] whitespace-nowrap overflow-hidden">
            <div className={"w-[70px] h-[24px] flex items-center shrink-0 " + bar}>
              <Grip />
              <span className="w-[51px] h-[21px] -ml-[3px] bg-[#e8e6e0] border border-[#0a246a] flex items-center justify-center gap-[7px] shrink-0">
                <Ic k="selArrow" size={14} /><T s="选择" />
              </span>
              <span className="ml-[3px]"><Caret /></span>
            </div>
            <div className={"flex-1 h-[24px] flex items-center pl-[3px] gap-[8px] overflow-hidden " + bar}>
              <span className="-mr-[8px]"><Grip /></span>
              <Tool k="pmgr" s="图纸管理" />
              <Tool k="gCad" s="插入CAD图" grey />
              <Tool k="gCad" s="定位CAD图" grey />
              <Tool k="gCad" s="清除CAD图" grey />
              <Tool k="gMag" s="设置比例" grey />
              <Tool k="gStack" s="批量替换" grey />
              <Tool k="gGrid" s="还原CAD图元" grey />
              <Sep />
              <span className="-ml-[2px]"><Tool k="gTool" s="修改" grey /></span>
            </div>
          </div>
          <div className="h-[26px] pt-[1px] flex items-center shrink-0 pl-[2px] gap-[3px] whitespace-nowrap overflow-hidden">
            <div className={"w-[256px] h-[25px] flex items-center gap-[8px] shrink-0 " + bar}>
              <span className="-mr-[8px]"><Grip /></span>
              <Tool k="gPhi" s="转换符号" grey />
              <Tool k="gFloor" s="识别楼层表" grey />
              <Tool k="gDoor" s="识别门窗表" grey />
            </div>
            <div className={"flex-1 h-[25px] flex items-center pl-[1px] gap-[8px] overflow-hidden " + bar}>
              <span className="-mr-[8px]"><Grip /></span>
              <Tool k="gBox" s="显示指定图层" grey />
              <Tool k="gBox" s="隐藏指定图层" grey />
              <Sep />
              <span className="-ml-[3px]"><Tool k="gSel" s="选择同图层CAD图元" grey /></span>
              <Tool k="gSel" s="选择同颜色CAD图元" grey />
            </div>
          </div>
          <div className="flex-1 bg-black overflow-hidden min-h-0"><Canvas /></div>
        </div>
      </div>
      <Dialogs />
    </div>
  );
}
